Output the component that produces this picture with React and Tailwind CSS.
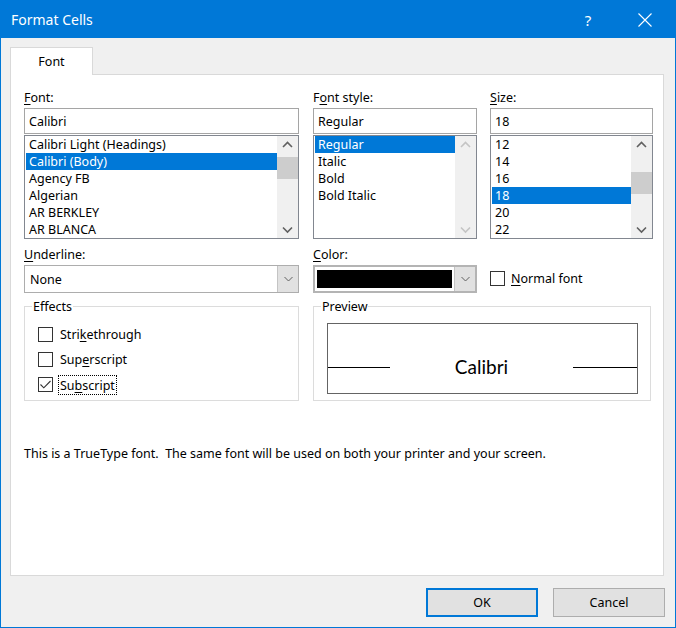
import React from "react";

const ui = "font-['Noto_Sans',sans-serif] text-[12.5px] leading-[16px] text-black";

function U({ children }) {
  return <span className="underline underline-offset-[2px]">{children}</span>;
}

function Chevron({ dir = "up", disabled = false }) {
  const pts = dir === "up" ? "1,6 5.5,1.5 10,6" : "1,1.5 5.5,6 10,1.5";
  return (
    <svg width="11" height="8" viewBox="0 0 11 8">
      <polyline
        points={pts}
        fill="none"
        stroke={disabled ? "#c4c4c4" : "#606060"}
        strokeWidth="1.6"
      />
    </svg>
  );
}

function DropArrow() {
  return (
    <svg width="9" height="6" viewBox="0 0 9 6">
      <polyline points="0.5,1 4.5,5 8.5,1" fill="none" stroke="#606060" strokeWidth="1" />
    </svg>
  );
}

function Scrollbar({ thumbTop, disabled }) {
  return (
    <div className="w-[21px] bg-[#f0f0f0] flex flex-col">
      <div className="h-[17px] flex items-center justify-center">
        <Chevron dir="up" disabled={disabled} />
      </div>
      {!disabled && (
        <div className="h-[22px] bg-[#cdcdcd]" style={{ marginTop: thumbTop }} />
      )}
      <div className="flex-1" />
      <div className="h-[17px] flex items-center justify-center">
        <Chevron dir="down" disabled={disabled} />
      </div>
    </div>
  );
}

function ListBox({ items, selected, thumbTop, disabled }) {
  return (
    <div className="mt-px h-[104px] border border-[#828790] bg-white flex pl-px">
      <div className="flex-1 flex flex-col overflow-hidden">
        {items.map((it, i) => (
          <div
            key={it}
            className={
              "h-[17px] shrink-0 pl-[3px] pt-px flex items-center whitespace-nowrap " +
              (i === selected ? "bg-[#0078d7] text-white" : "")
            }
          >
            {it}
          </div>
        ))}
      </div>
      <Scrollbar thumbTop={thumbTop} disabled={disabled} />
    </div>
  );
}

function TextBox({ value }) {
  return (
    <div className="mt-[3px] h-[26px] border border-[#a5a5a5] bg-white pl-[4px] pt-px flex items-center">
      {value}
    </div>
  );
}

function CheckBox({ checked }) {
  return (
    <div className="w-[15px] h-[15px] border border-[#333333] bg-white flex items-center justify-center shrink-0">
      {checked && (
        <svg width="11" height="9" viewBox="0 0 11 9">
          <polyline points="0.5,4.5 3.8,7.8 10.5,1" fill="none" stroke="#333333" strokeWidth="1.1" />
        </svg>
      )}
    </div>
  );
}

export default function App() {
  const fonts = [
    "Calibri Light (Headings)",
    "Calibri (Body)",
    "Agency FB",
    "Algerian",
    "AR BERKLEY",
    "AR BLANCA",
  ];
  const styles = ["Regular", "Italic", "Bold", "Bold Italic"];
  const sizes = ["12", "14", "16", "18", "20", "22"];

  return (
    <div className={"w-[676px] h-[628px] border border-[#0078d7] bg-[#f0f0f0] flex flex-col " + ui}>
      {/* title bar */}
      <div className="h-[37px] bg-[#0078d7] flex items-center text-white">
        <div className="pl-[10px] pt-px text-[14px] flex-1">Format Cells</div>
        <div className="w-[46px] h-full flex items-center justify-center text-[15px] mr-[11px]">?</div>
        <div className="w-[46px] h-full flex items-center justify-center mr-[7px]">
          <svg width="14" height="14" viewBox="0 0 14 14">
            <path d="M0.5 0.5 L13.5 13.5 M13.5 0.5 L0.5 13.5" stroke="#ffffff" strokeWidth="1.1" />
          </svg>
        </div>
      </div>

      {/* body */}
      <div className="flex-1 flex flex-col pt-[9px] pl-[9px] pr-[10px]">
        <div className="relative z-10 -mb-px w-[83px] h-[28px] border border-b-0 border-[#d9d9d9] bg-white flex items-center justify-center">
          Font
        </div>

        <div className="w-[654px] h-[502px] border border-[#d9d9d9] bg-white pt-[15px] pl-[13px] flex flex-col">
          {/* font / style / size */}
          <div className="flex">
            <div className="w-[275px] flex flex-col">
              <div className="h-[15px]">
                <U>F</U>ont:
              </div>
              <TextBox value="Calibri" />
              <ListBox items={fonts} selected={1} thumbTop={4} />
            </div>
            <div className="ml-[14px] w-[164px] flex flex-col">
              <div className="h-[15px]">
                F<U>o</U>nt style:
              </div>
              <TextBox value="Regular" />
              <ListBox items={styles} selected={0} disabled />
            </div>
            <div className="ml-[13px] w-[163px] flex flex-col">
              <div className="h-[15px]">
                <U>S</U>ize:
              </div>
              <TextBox value="18" />
              <ListBox items={sizes} selected={3} thumbTop={19} />
            </div>
          </div>

          {/* underline / color / normal font */}
          <div className="flex mt-[8px]">
            <div className="w-[275px] flex flex-col">
              <div className="h-[15px]">
                <U>U</U>nderline:
              </div>
              <div className="mt-[3px] h-[28px] border border-[#adadad] bg-white flex">
                <div className="flex-1 pl-[5px] pt-px flex items-center">None</div>
                <div className="w-[21px] bg-[#e1e1e1] border-l border-[#c4c4c4] flex items-center justify-center">
                  <DropArrow />
                </div>
              </div>
            </div>
            <div className="ml-[14px] w-[164px] flex flex-col">
              <div className="h-[15px]">
                <U>C</U>olor:
              </div>
              <div className="mt-[3px] h-[28px] border-2 border-[#b4b4b4] bg-white flex">
                <div className="flex-1 px-[2px] flex items-center">
                  <div className="w-full h-[18px] bg-black" />
                </div>
                <div className="w-[21px] bg-[#e1e1e1] border-l border-[#c4c4c4] flex items-center justify-center">
                  <DropArrow />
                </div>
              </div>
            </div>
            <div className="ml-[13px] w-[163px] pt-[23px] flex items-start">
              <div className="flex items-center h-[16px]">
                <CheckBox />
                <span className="ml-[6px] pt-[2px]">
                  <U>N</U>ormal font
                </span>
              </div>
            </div>
          </div>

          {/* effects / preview */}
          <div className="flex mt-[13px]">
            <div className="relative w-[275px] h-[95px] border border-[#dcdcdc] pt-[15px] pl-[13px] flex flex-col">
              <div className="absolute left-[7px] top-[-8px] bg-white px-px">Effects</div>
              <div className="h-[25px] flex items-center">
                <CheckBox />
                <span className="ml-[6px] px-px pt-px">
                  Stri<U>k</U>ethrough
                </span>
              </div>
              <div className="h-[25px] flex items-center">
                <CheckBox />
                <span className="ml-[6px] px-px pt-px">
                  Sup<U>e</U>rscript
                </span>
              </div>
              <div className="h-[25px] flex items-center">
                <CheckBox checked />
                <span className="ml-[5px] px-px pt-px border border-dotted border-black leading-[17px]">
                  Su<U>b</U>script
                </span>
              </div>
            </div>
            <div className="relative ml-[14px] w-[338px] h-[95px] border border-[#dcdcdc] pt-[16px] pl-[13px] pr-[12px]">
              <div className="absolute left-[7px] top-[-8px] bg-white px-px">Preview</div>
              <div className="h-[71px] border border-[#646464]">
                <div className="mt-[35px] h-[17px] flex items-center">
                  <div className="w-[62px] h-px bg-black" />
                  <div className="flex-1 text-center font-['Lato',sans-serif] text-[19px] leading-[17px] pb-[2px]">
                    Calibri
                  </div>
                  <div className="w-[64px] h-px bg-black" />
                </div>
              </div>
            </div>
          </div>

          <div className="mt-[45px]">
            This is a TrueType font.&nbsp; The same font will be used on both your printer and your screen.
          </div>
        </div>

        {/* buttons */}
        <div className="mt-[12px] flex justify-end">
          <button className="w-[112px] h-[29px] border-2 border-[#0078d7] bg-[#e1e1e1] pt-px flex items-center justify-center">
            OK
          </button>
          <button className="ml-[15px] w-[112px] h-[29px] border border-[#adadad] bg-[#e1e1e1] pt-px flex items-center justify-center">
            Cancel
          </button>
        </div>
      </div>
    </div>
  );
}
